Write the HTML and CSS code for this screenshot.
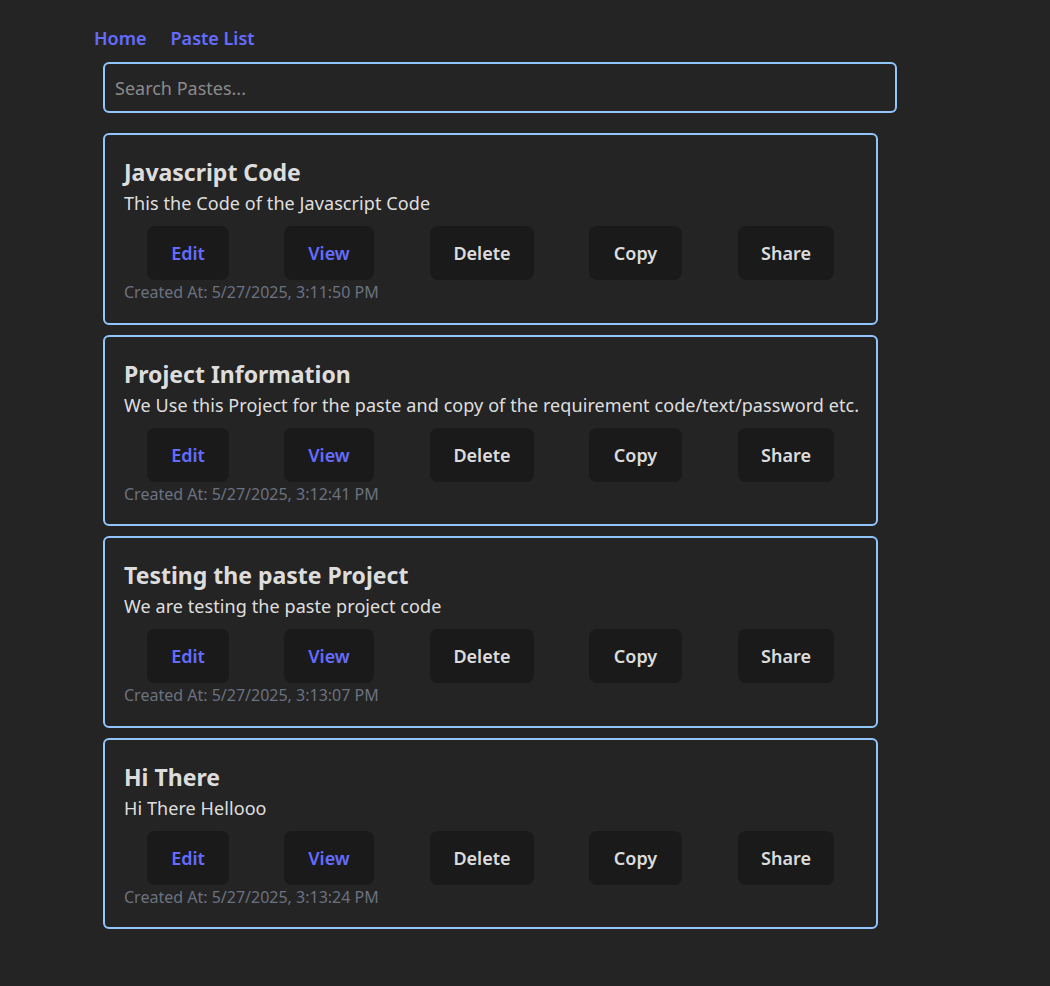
FILE: index.html
```html
<!DOCTYPE html>
<html lang="en">
<head>
<meta charset="UTF-8">
<title>Paste App</title>
<link rel="stylesheet" href="styles.css">
</head>
<body>
<div class="app">
  <nav class="nav">
    <a class="nav-link" href="#">Home</a>
    <a class="nav-link" href="#">Paste List</a>
  </nav>
  <div class="content">
    <input class="search" type="text" placeholder="Search Pastes...">
    <div class="list">
      <div class="card">
        <div class="card-title">Javascript Code</div>
        <div class="card-desc">This the Code of the Javascript Code</div>
        <div class="actions">
          <button class="btn btn-link btn-edit">Edit</button>
          <button class="btn btn-link btn-view">View</button>
          <button class="btn btn-delete">Delete</button>
          <button class="btn btn-copy">Copy</button>
          <button class="btn btn-share">Share</button>
        </div>
        <div class="created">Created At: 5/27/2025, 3:11:50 PM</div>
      </div>
      <div class="card">
        <div class="card-title">Project Information</div>
        <div class="card-desc">We Use this Project for the paste and copy of the requirement code/text/password etc.</div>
        <div class="actions">
          <button class="btn btn-link btn-edit">Edit</button>
          <button class="btn btn-link btn-view">View</button>
          <button class="btn btn-delete">Delete</button>
          <button class="btn btn-copy">Copy</button>
          <button class="btn btn-share">Share</button>
        </div>
        <div class="created">Created At: 5/27/2025, 3:12:41 PM</div>
      </div>
      <div class="card">
        <div class="card-title">Testing the paste Project</div>
        <div class="card-desc">We are testing the paste project code</div>
        <div class="actions">
          <button class="btn btn-link btn-edit">Edit</button>
          <button class="btn btn-link btn-view">View</button>
          <button class="btn btn-delete">Delete</button>
          <button class="btn btn-copy">Copy</button>
          <button class="btn btn-share">Share</button>
        </div>
        <div class="created">Created At: 5/27/2025, 3:13:07 PM</div>
      </div>
      <div class="card">
        <div class="card-title">Hi There</div>
        <div class="card-desc">Hi There Hellooo</div>
        <div class="actions">
          <button class="btn btn-link btn-edit">Edit</button>
          <button class="btn btn-link btn-view">View</button>
          <button class="btn btn-delete">Delete</button>
          <button class="btn btn-copy">Copy</button>
          <button class="btn btn-share">Share</button>
        </div>
        <div class="created">Created At: 5/27/2025, 3:13:24 PM</div>
      </div>
    </div>
  </div>
</div>
</body>
</html>
```
FILE: styles.css
```css
* { box-sizing: border-box; }
html, body {
  margin: 0;
  background: #242424;
  font-family: "Noto Sans", "Open Sans", sans-serif;
  color: rgba(255, 255, 255, 0.87);
}
.app {
  padding: 26px 0 0 94px;
}
.nav {
  display: flex;
  gap: 24px;
  height: 24px;
  align-items: center;
}
.nav-link {
  color: #646cff;
  font-size: 18px;
  font-weight: 600;
  text-decoration: none;
  line-height: 24px;
}
.content {
  margin: 12px 0 0 9px;
}
.search {
  display: block;
  width: 794px;
  height: 51px;
  border: 2px solid #93c5fd;
  border-radius: 6px;
  background: transparent;
  padding: 0 10px;
  font-family: inherit;
  font-size: 18px;
  color: rgba(255, 255, 255, 0.87);
  outline: none;
}
.search::placeholder { color: #8a8a8a; }
.list {
  margin-top: 20px;
  display: flex;
  flex-direction: column;
  gap: 10px;
}
.card {
  width: 775px;
  border: 2px solid #93c5fd;
  border-radius: 6px;
  padding: 21px 19px 18.5px 19px;
  display: flex;
  flex-direction: column;
}
.card-title {
  font-size: 23px;
  font-weight: 700;
  line-height: 32px;
}
.card-desc {
  margin-top: 2px;
  font-size: 18px;
  line-height: 26px;
  letter-spacing: 0.08px;
  white-space: nowrap;
}
.actions {
  margin-top: 10px;
  display: flex;
  padding-left: 23px;
  gap: 55px;
}
.btn {
  height: 54px;
  padding: 0;
  border: 1px solid transparent;
  border-radius: 8px;
  background: #1a1a1a;
  font-family: inherit;
  font-size: 18px;
  font-weight: 600;
  color: rgba(255, 255, 255, 0.87);
  cursor: pointer;
}
.btn-link { color: #646cff; }
.btn-edit { width: 82px; }
.btn-view { width: 90px; }
.btn-delete { width: 104px; margin-left: 1px; }
.btn-copy { width: 93px; }
.btn-share { width: 96px; margin-left: 1px; }
.created {
  font-size: 16px;
  line-height: 24px;
  color: #6b7280;
}
```
